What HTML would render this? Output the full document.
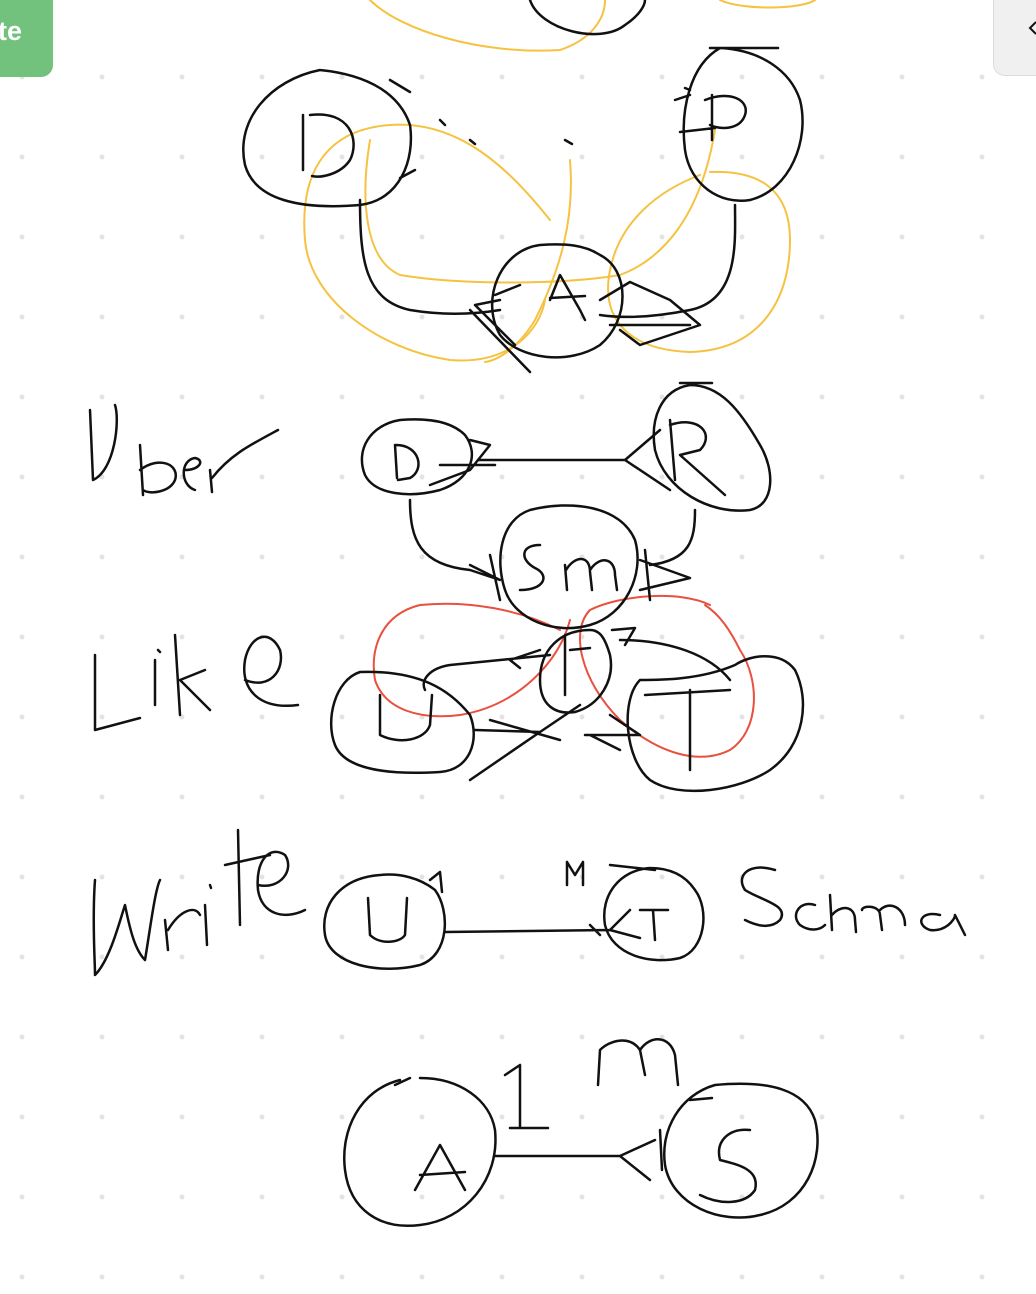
<!DOCTYPE html>
<html><head><style>
html,body{margin:0;padding:0;background:#fff;width:1036px;height:1294px;overflow:hidden;position:relative;font-family:"Liberation Sans",sans-serif}
.btn{position:absolute;left:-12px;top:-12px;width:65px;height:89px;background:#72c17d;border-radius:12px;color:#fff;font-weight:bold;font-size:27px}
.btn span{position:absolute;left:10px;top:28px}
.rp{position:absolute;left:993px;top:-12px;width:60px;height:86px;background:#f0f0f0;border:1px solid #dcdcdc;border-radius:12px}
svg{position:absolute;left:0;top:0}
</style></head><body>
<svg width="1036" height="1294">
<defs><pattern id="d" x="0" y="0" width="80" height="80" patternUnits="userSpaceOnUse"><circle cx="22" cy="77" r="2.5" fill="#e3e3e3"/></pattern></defs>
<rect width="1036" height="1294" fill="url(#d)"/>
<g fill="none" stroke="#f5c242" stroke-width="2" stroke-linecap="round">
<path d="M370 0 C400 30 480 55 560 50 C590 40 605 20 605 0"/>
<path d="M720 0 C740 10 800 10 815 0"/>
<path d="M550 220 C510 170 460 120 390 125 C320 130 300 180 305 240 C310 300 380 350 450 360 C510 365 540 330 545 300"/>
<path d="M370 140 C360 200 365 260 400 275 C460 285 560 285 620 275 C660 260 700 220 715 130"/>
<path d="M570 160 C575 220 560 270 535 320 C520 345 500 360 485 362"/>
<path d="M700 175 C660 190 620 220 610 270 C600 320 630 350 690 352 C760 350 790 300 790 240 C790 190 760 170 710 172"/>
</g>
<g fill="none" stroke="#e8503f" stroke-width="2" stroke-linecap="round">
<path d="M560 630 C520 610 470 600 420 605 C380 615 370 650 375 680 C385 710 420 720 460 715 C520 705 560 660 570 620"/>
<path d="M710 605 C680 590 620 595 590 610 C570 630 580 680 620 720 C660 755 700 765 730 750 C760 730 760 680 740 650 C730 630 720 615 705 605"/>
</g>
<g fill="none" stroke="#111" stroke-width="2.5" stroke-linecap="round" stroke-linejoin="round">
<path d="M530 0 C540 30 600 45 625 25 C640 15 645 5 645 0"/>
<path d="M320 70 C270 80 235 120 245 165 C255 200 300 210 360 205 C400 200 415 160 410 125 C400 95 370 75 320 70"/>
<path d="M303 115 L303 170 M310 115 C350 110 360 140 350 160 C340 175 320 178 312 176"/>
<path d="M390 80 L410 92 M440 120 L445 125 M470 140 L475 144 M565 140 L572 144 M400 178 L415 170"/>
<path d="M720 48 C690 65 680 110 685 150 C690 185 720 205 750 200 C790 190 810 140 800 100 C790 70 760 50 720 48 M710 48 L778 48"/>
<path d="M712 95 L712 140 M705 100 C730 90 750 100 745 115 C740 130 720 130 710 125 M680 132 L715 128 M675 100 L690 95 M685 88 L690 90"/>
<path d="M360 200 C360 260 365 300 410 310 C440 315 470 315 500 310"/>
<path d="M735 205 C735 240 740 300 690 310 C650 318 620 318 600 315"/>
<path d="M540 245 C500 250 480 300 500 335 C520 360 570 365 600 345 C630 320 630 270 600 255 C585 245 565 243 540 245"/>
<path d="M550 300 L560 275 L580 310 L585 320 M550 298 L585 296"/>
<path d="M500 300 L475 305 L500 330 L515 345 M470 310 L530 372 M495 295 L520 285"/>
<path d="M600 300 L630 282 L670 300 L700 325 L640 345 L620 330 M610 325 L690 325"/>
<path d="M90 410 L93 480 M93 480 C115 470 120 420 115 405 M140 445 L143 495 M140 470 C160 455 180 465 175 480 C170 492 150 495 143 490 M185 470 C200 470 205 460 195 458 C180 460 180 485 195 490 M210 470 L212 492 M212 478 C230 455 250 445 278 430"/>
<path d="M400 420 C370 425 355 450 365 475 C375 495 410 498 440 490 C470 480 480 455 465 435 C450 420 425 418 400 420"/>
<path d="M395 445 L397 478 M396 445 C420 445 425 470 410 478 L398 480 M430 485 L470 470 L490 445 L470 440 M440 465 L495 465"/>
<path d="M478 460 L625 460 L660 430 M625 460 L670 490"/>
<path d="M690 385 C660 390 650 420 655 450 C665 490 710 515 750 510 C775 505 775 470 760 445 C740 410 720 385 690 385 M680 383 L712 383"/>
<path d="M670 420 L675 480 M670 425 C700 415 715 435 700 450 L680 455 L725 495"/>
<path d="M530 510 C500 520 495 560 505 590 C515 620 555 635 590 625 C625 615 645 575 635 540 C620 505 570 500 530 510"/>
<path d="M540 545 C520 545 520 560 535 568 C550 575 545 590 520 590 M565 565 L567 590 M566 570 C575 555 590 555 590 572 L592 590 M590 570 C600 555 615 558 615 575 L617 590"/>
<path d="M410 500 C410 540 420 565 470 570 M470 565 L500 580 L470 570 M490 555 L500 600"/>
<path d="M695 510 C695 540 690 560 650 565 M640 560 L690 578 L640 590 M645 550 L650 600"/>
<path d="M590 630 C560 630 540 650 540 680 C540 705 555 715 575 712 C600 705 615 680 610 655 C605 638 600 630 590 630 M565 635 L565 695 M570 650 L590 648 M612 630 L635 628 L625 645"/>
<path d="M550 655 L450 665 C430 668 420 680 425 690 M540 650 L510 660 L520 668"/>
<path d="M620 640 C670 640 710 655 730 680"/>
<path d="M95 655 L95 730 L140 718 M155 660 L155 705 M158 650 L160 652 M175 635 L180 715 M180 680 L205 670 M180 680 L210 710 M245 680 C270 690 285 670 280 650 C270 628 250 635 245 660 C240 690 260 710 298 705"/>
<path d="M360 672 C335 680 325 720 335 745 C345 770 390 775 440 772 C470 770 480 740 470 715 C450 690 420 670 360 672"/>
<path d="M380 695 L380 735 C400 745 425 740 430 725 L432 695"/>
<path d="M475 730 L540 732 L580 705 M540 732 L470 780 M490 720 L560 740"/>
<path d="M640 680 C620 700 625 760 650 780 C680 800 740 790 770 770 C805 745 810 700 795 670 C780 650 750 655 735 665 C700 680 660 680 640 680"/>
<path d="M690 690 L690 770 M645 695 L730 690 M585 735 L640 735 L610 715 M590 735 L620 750"/>
<path d="M95 880 C92 920 95 960 95 975 C110 960 120 920 125 905 C130 930 135 950 145 960 C150 930 155 890 160 880 M165 920 L168 950 M168 930 C180 910 195 905 200 915 M205 905 L207 945 M210 885 L211 888 M238 830 L240 925 M225 865 L270 855 M258 885 C280 890 295 870 285 855 C270 845 255 860 258 890 C262 915 285 920 305 910"/>
<path d="M380 875 C340 878 320 905 325 935 C330 965 380 975 420 965 C450 955 450 910 435 890 C420 878 400 873 380 875"/>
<path d="M368 898 L370 935 C380 945 400 943 405 935 L407 898 M430 880 L440 872 L442 892"/>
<path d="M445 932 L610 930 L630 910 M610 930 L640 938 M590 925 L600 935"/>
<path d="M650 868 C620 870 600 895 605 925 C612 955 650 965 680 958 C705 950 710 910 695 890 C685 875 670 868 650 868 M610 865 L655 870 M640 910 L668 910 M653 910 L655 940"/>
<path d="M567 862 L567 885 M567 862 L575 875 L583 862 L583 885"/>
<path d="M775 870 C750 862 735 875 745 890 C760 900 790 905 780 920 C770 930 755 925 745 920 M815 905 C800 900 790 915 800 925 C810 932 820 930 825 925 M830 895 L832 930 M832 915 C840 905 855 905 855 920 L856 932 M862 910 C862 905 880 905 880 915 L882 930 M880 910 C890 900 905 908 905 925 M940 915 C920 910 915 925 930 930 C945 932 955 920 955 915 L965 935"/>
<path d="M400 1080 C360 1090 340 1130 345 1170 C350 1210 380 1230 420 1225 C465 1220 500 1180 495 1130 C490 1100 460 1078 420 1078 M395 1085 L410 1078"/>
<path d="M415 1190 L440 1145 L465 1190 M420 1175 L465 1172"/>
<path d="M505 1075 L520 1065 L520 1128 M510 1128 L548 1128"/>
<path d="M598 1085 L600 1050 C610 1040 630 1035 640 1050 L645 1075 M640 1050 C650 1035 670 1035 675 1055 L678 1085"/>
<path d="M495 1156 L620 1156 L655 1140 M620 1156 L650 1180 M660 1130 L662 1170"/>
<path d="M715 1085 C680 1095 660 1130 665 1165 C672 1205 720 1225 760 1215 C805 1205 825 1160 815 1120 C805 1090 770 1080 715 1085 M690 1100 L712 1098"/>
<path d="M750 1130 C730 1128 715 1140 720 1160 C740 1165 760 1170 755 1190 C745 1205 720 1205 700 1195"/>
</g>
</svg>
<div class="btn"><span>te</span></div>
<div class="rp"></div>
<svg width="1036" height="80" style="pointer-events:none"><path d="M1036 22 L1030 28 L1036 34" fill="none" stroke="#111" stroke-width="2"/></svg>
</body></html>
